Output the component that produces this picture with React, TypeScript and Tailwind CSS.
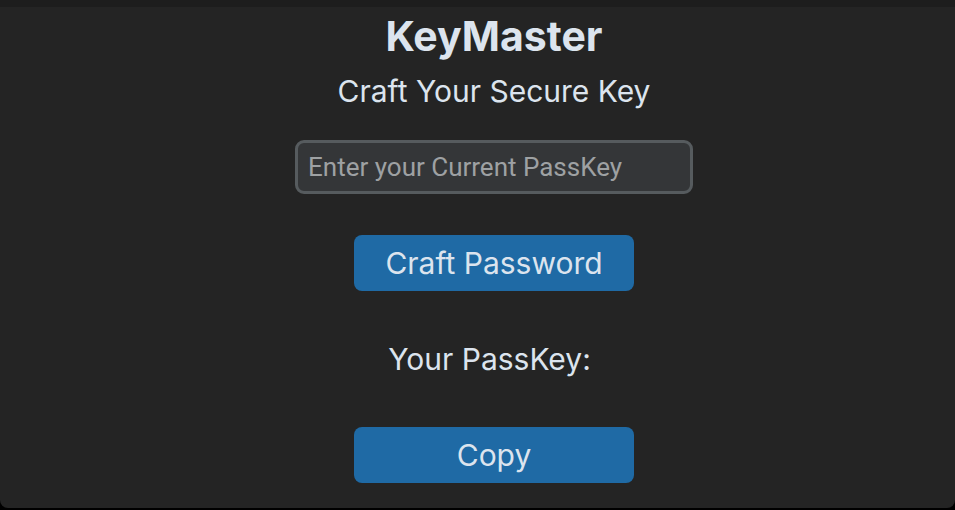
import React, { useState } from 'react';

export default function App() {
  const [current, setCurrent] = useState('');
  const [passKey, setPassKey] = useState('');

  const craft = () => {
    if (!current) return;
    setPassKey(current.split('').reverse().join('') + '#' + current.length);
  };

  const copy = async () => {
    try {
      await navigator.clipboard.writeText(passKey);
    } catch (err) {
      console.error('Failed to copy:', err);
    }
  };

  return (
    <div className="h-[510px] w-[955px] bg-black overflow-hidden">
      {/* Window */}
      <div className="h-[508px] flex flex-col rounded-b-[8px] overflow-hidden bg-[#242424]">
        <div className="h-[7px] bg-[#1d1d1d]" />
        <div className="flex-1 flex flex-col items-center pl-[33px] font-['Inter',sans-serif] text-[#dce4ee]">
          <h1 className="mt-[5px] text-[41px] leading-[48px] font-bold">KeyMaster</h1>
          <p className="mt-[13px] text-[30px] leading-[36px]">Craft Your Secure Key</p>

          <input
            value={current}
            onChange={(e) => setCurrent(e.target.value)}
            placeholder="Enter your Current PassKey"
            className="mt-[31px] w-[398px] h-[54px] px-[10px] rounded-[9px] border-[3px] border-[#565b5e] bg-[#343638] font-['Roboto',sans-serif] text-[26px] text-[#dce4ee] placeholder:text-[#9ea1a3] outline-none"
          />

          <button
            onClick={craft}
            className="mt-[41px] w-[280px] h-[56px] rounded-[8px] bg-[#1f6aa5] text-[30px] text-[#dce4ee]"
          >
            Craft Password
          </button>

          <p className="mt-[50px] pr-[9px] text-[30px] leading-[36px]">
            Your PassKey:{passKey ? ' ' + passKey : ''}
          </p>

          <button
            onClick={copy}
            className="mt-[50px] w-[280px] h-[56px] rounded-[8px] bg-[#1f6aa5] text-[30px] text-[#dce4ee]"
          >
            Copy
          </button>
        </div>
      </div>
    </div>
  );
}
